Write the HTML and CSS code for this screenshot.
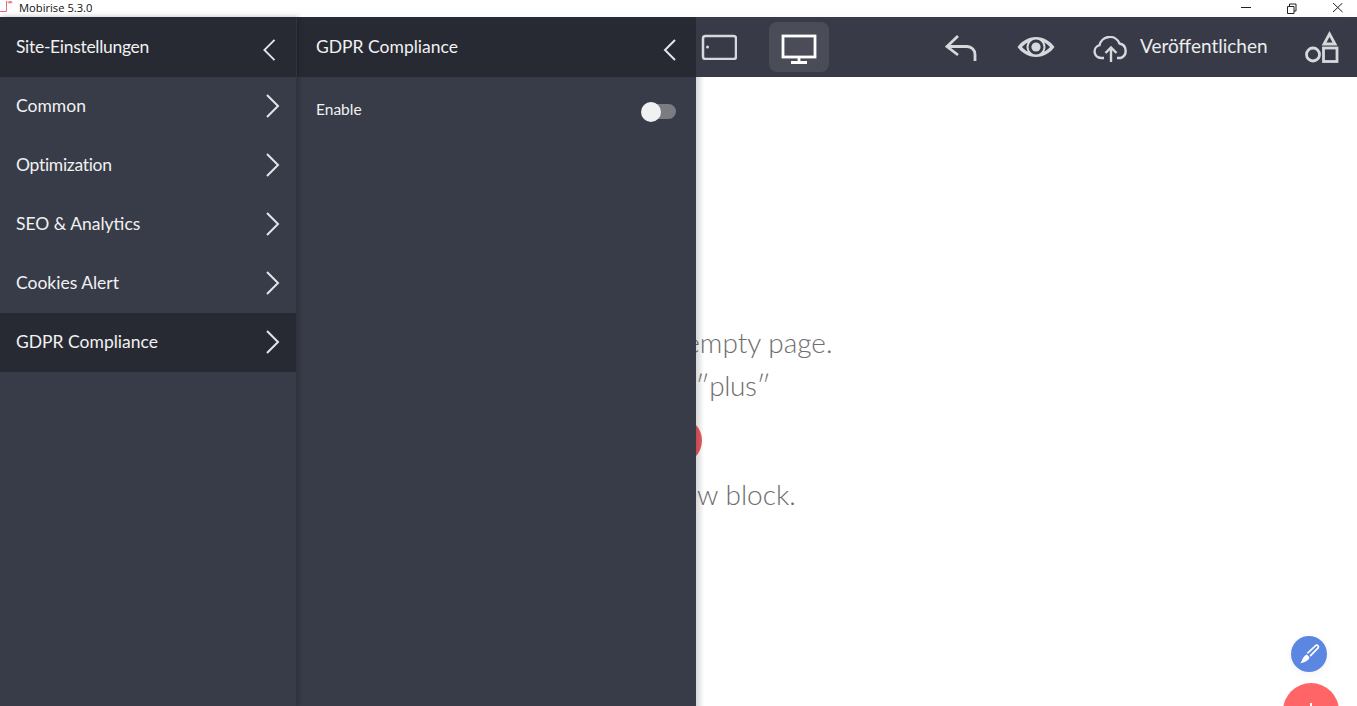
FILE: index.html
```html
<!DOCTYPE html>
<html lang="de">
<head>
<meta charset="utf-8">
<title>Mobirise 5.3.0</title>
<link rel="stylesheet" href="styles.css">
</head>
<body>
<div class="app">
  <header class="titlebar">
    <svg class="app-icon" width="18" height="17" viewBox="0 0 18 17" fill="none" stroke="#ee6a78" stroke-width="1"><path d="M0 11.500h6.500V1"/><path d="M9 1l2 2.500M11 1L9 3.500M7.500 2.200h5"/></svg>
    <span class="app-name">Mobirise 5.3.0</span>
    <div class="win-controls">
      <svg width="12" height="12" viewBox="0 0 12 12" fill="none" stroke="#222"><path d="M1 4.500h10"/></svg>
      <svg width="12" height="12" viewBox="0 0 12 12" fill="none" stroke="#222"><path d="M1.500 3.500h6.500v7h-6.500zM3.500 3.500v-2.500h6.500v7h-2"/></svg>
      <svg width="12" height="12" viewBox="0 0 12 12" fill="none" stroke="#222"><path d="M1 0l9.500 9M10.500 0l-9.500 9"/></svg>
    </div>
  </header>

  <nav class="toolbar">
    <svg class="tool-tablet" width="36" height="26" viewBox="0 0 36 26" fill="none" stroke="#d6d8dc" stroke-width="2.500"><rect x="2" y="2" width="33" height="23" rx="2.500"/><circle cx="6.500" cy="13" r="1.500" fill="#d6d8dc" stroke="none"/></svg>
    <div class="tool-active">
      <svg width="36" height="30" viewBox="0 0 36 30" fill="none" stroke="#fff" stroke-width="2.800"><rect x="2" y="2" width="32" height="21"/><path d="M18 23v5M10 28.500h16"/></svg>
    </div>
    <svg class="tool-undo" width="32" height="28" viewBox="0 0 32 28" fill="none" stroke="#d6d8dc" stroke-width="2.800"><path d="M13 2L2 12.500 13 21"/><path d="M2 12.500h20a8 8 0 0 1 8 8V27"/></svg>
    <svg class="tool-eye" width="38" height="22" viewBox="0 0 38 22" fill="#d6d8dc"><path fill-rule="evenodd" d="M19 1C11 1 4.500 5.500 0.500 11 4.500 16.500 11 21 19 21s14.500-4.500 18.500-10C33.500 5.500 27 1 19 1zM19 3.500A7.500 7.500 0 1 1 19 18.500 7.500 7.500 0 0 1 19 3.500zM5 11c1.800-2 3.500-3.400 5.700-4.600A10 10 0 0 0 10.700 15.600C8.500 14.400 6.800 13 5 11zM33 11c-1.800 2-3.500 3.400-5.700 4.600A10 10 0 0 0 27.300 6.400C29.500 7.600 31.200 9 33 11z"/><circle cx="19" cy="11" r="4.600"/></svg>
    <svg class="tool-cloud" width="36" height="26" viewBox="0 0 36 26" fill="none" stroke="#d6d8dc" stroke-width="2.400"><path d="M11 22H8a6.500 6.500 0 0 1-1.500-12.800A10.500 10.500 0 0 1 26.500 7.500 7.500 7.500 0 0 1 27.500 22H24"/><path d="M18 26V12M12.500 17l5.500-5.500 5.500 5.500"/></svg>
    <span class="publish">Veröffentlichen</span>
    <svg class="tool-shapes" width="34" height="32" viewBox="0 0 34 32" fill="none" stroke="#d6d8dc" stroke-width="2.800"><path d="M24.500 3L30 13H19z"/><rect x="18.500" y="17" width="13.500" height="13.500"/><circle cx="8" cy="23.500" r="6.500"/></svg>
  </nav>

  <main class="canvas">
    <p class="line line-a">Start with an empty page.</p>
    <p class="line line-b">Click the ″plus″</p>
    <div class="red-dot"></div>
    <p class="line line-c">to add a new block.</p>
    <button class="fab-blue" aria-label="Edit styles">
      <svg width="24" height="24" viewBox="0 0 22 22" fill="none" stroke="#fff" stroke-width="1.500"><path d="M9.500 10.500L17.500 3a1.600 1.600 0 0 1 2 2.200L12 13"/><path d="M9 11.500l2.500 2.500c-.5 2.500-3 4.500-8.500 5.500 1.500-1.500 1.500-3.500 3-5.500.7-1 1.800-2 3-2.500z" fill="#fff" stroke="none"/></svg>
    </button>
    <button class="fab-red" aria-label="Add block"><span class="plus"></span></button>
  </main>

  <div class="panels">
    <aside class="sidebar">
      <div class="row row-head"><span class="tight">Site-Einstellungen</span>
        <svg class="chev-left" width="16" height="26" viewBox="0 0 16 26" fill="none" stroke="#e4e5e8" stroke-width="2"><path d="M14 2L3 13l11 11"/></svg>
      </div>
      <div class="row"><span>Common</span><svg class="chev" width="16" height="26" viewBox="0 0 16 26" fill="none" stroke="#e4e5e8" stroke-width="2"><path d="M2 2l11 11L2 24"/></svg></div>
      <div class="row"><span class="tight">Optimization</span><svg class="chev" width="16" height="26" viewBox="0 0 16 26" fill="none" stroke="#e4e5e8" stroke-width="2"><path d="M2 2l11 11L2 24"/></svg></div>
      <div class="row"><span>SEO &amp; Analytics</span><svg class="chev" width="16" height="26" viewBox="0 0 16 26" fill="none" stroke="#e4e5e8" stroke-width="2"><path d="M2 2l11 11L2 24"/></svg></div>
      <div class="row"><span>Cookies Alert</span><svg class="chev" width="16" height="26" viewBox="0 0 16 26" fill="none" stroke="#e4e5e8" stroke-width="2"><path d="M2 2l11 11L2 24"/></svg></div>
      <div class="row row-active"><span>GDPR Compliance</span><svg class="chev" width="16" height="26" viewBox="0 0 16 26" fill="none" stroke="#e4e5e8" stroke-width="2"><path d="M2 2l11 11L2 24"/></svg></div>
    </aside>
    <section class="detail">
      <div class="detail-head"><span>GDPR Compliance</span>
        <svg class="chev-back" width="14" height="24" viewBox="0 0 14 24" fill="none" stroke="#e4e5e8" stroke-width="2"><path d="M12 2L2 12l10 10"/></svg>
      </div>
      <div class="setting"><span>Enable</span>
        <div class="switch"><div class="knob"></div></div>
      </div>
    </section>
  </div>
</div>
</body>
</html>
```

FILE: styles.css
```css
* { box-sizing: border-box; }
html, body { margin: 0; height: 100%; overflow: hidden; }
body { font-family: "Lato", "Open Sans", sans-serif; background: #fff; }

.app { position: relative; width: 1357px; height: 706px; display: flex; flex-direction: column; overflow: hidden; }

.titlebar { flex: 0 0 17px; display: flex; align-items: center; background: #fff; }
.app-icon { margin-right: 1px; }
.app-name { font-family: "Open Sans", sans-serif; font-size: 11.200px; color: #111; margin-top: -2px; }
.win-controls { margin-left: auto; display: flex; gap: 34px; padding-right: 13px; }

.toolbar { flex: 0 0 60px; background: #383b47; display: flex; align-items: center; padding-left: 701px; box-shadow: 0 4px 16px rgba(60, 70, 100, 0.07); position: relative; }
.tool-active { width: 60px; height: 50px; margin-left: 32px; background: #4a4d58; border-radius: 8px; display: flex; align-items: center; justify-content: center; padding-top: 3px; }
.tool-undo { margin-left: 116px; margin-top: 1px; }
.tool-eye { margin-left: 40px; }
.tool-cloud { margin-left: 38px; margin-top: 3px; }
.publish { width: 130px; margin-left: 11px; margin-bottom: 3px; color: #eceded; font-size: 19px; font-weight: 400; }
.tool-shapes { margin-left: 35px; margin-top: -1px; }

.canvas { flex: 1; position: relative; display: flex; flex-direction: column; align-items: center; padding-top: 244px; background: #fff; }
.line { margin: 0; font-size: 28px; font-weight: 300; line-height: 42px; color: #6e6e6e; white-space: nowrap; }
.line-b { margin-top: 1px; letter-spacing: -0.4px; }
.red-dot { width: 47px; height: 47px; border-radius: 50%; background: #e85a60; margin: 11px 0 9px; flex: none; }
.fab-blue, .fab-red { position: absolute; border: 0; padding: 0; border-radius: 50%; display: flex; justify-content: center; }
.fab-blue { left: 1291px; top: 559px; width: 36px; height: 36px; background: #5b87e2; align-items: center; box-shadow: 0 2px 8px rgba(0, 0, 0, 0.06); }
.fab-red { left: 1283px; top: 606px; width: 56px; height: 56px; background: #ff6466; align-items: center; }
.plus { display: block; width: 2px; height: 16px; background: #fff; }

.panels { position: absolute; left: 0; top: 17px; bottom: 0; display: flex; }
.panels::after { content: ""; position: absolute; left: 100%; top: 60px; bottom: 0; width: 8px; background: linear-gradient(to right, rgba(0, 0, 0, 0.16), rgba(0, 0, 0, 0)); }
.sidebar { width: 297px; background: #383c48; border-right: 1px solid #31343f; box-shadow: 1px 0 5px rgba(0, 0, 0, 0.25); position: relative; z-index: 1; }
.row { height: 59px; display: flex; align-items: center; justify-content: space-between; padding: 0 15px 0 16px; color: #f1f1f2; font-size: 17.500px; }
.row > span { margin-bottom: 2px; }
.chev { margin-bottom: 1px; }
.tight { letter-spacing: -0.3px; }
.row-head { height: 60px; background: #272a33; padding-right: 19px; }
.chev-left { height: 24px; margin-top: 6px; margin-bottom: 0; }
.row-active { background: #272a33; }

.detail { width: 399px; background: #383c48; }
.detail-head { height: 60px; background: #272a33; display: flex; align-items: center; justify-content: space-between; padding: 0 19px; color: #f1f1f2; font-size: 17.500px; }
.detail-head > span { margin-bottom: 2px; }
.chev-back { margin-top: 6px; }
.setting { display: flex; align-items: flex-start; justify-content: space-between; padding: 23px 20px 0 19px; color: #f1f1f2; font-size: 15.500px; }
.switch { position: relative; width: 34px; height: 15px; margin-top: 4px; border-radius: 8px; background: #7b7c82; }
.knob { position: absolute; left: -1px; top: -2.500px; width: 20px; height: 20px; border-radius: 50%; background: #f1f1f1; }
```
